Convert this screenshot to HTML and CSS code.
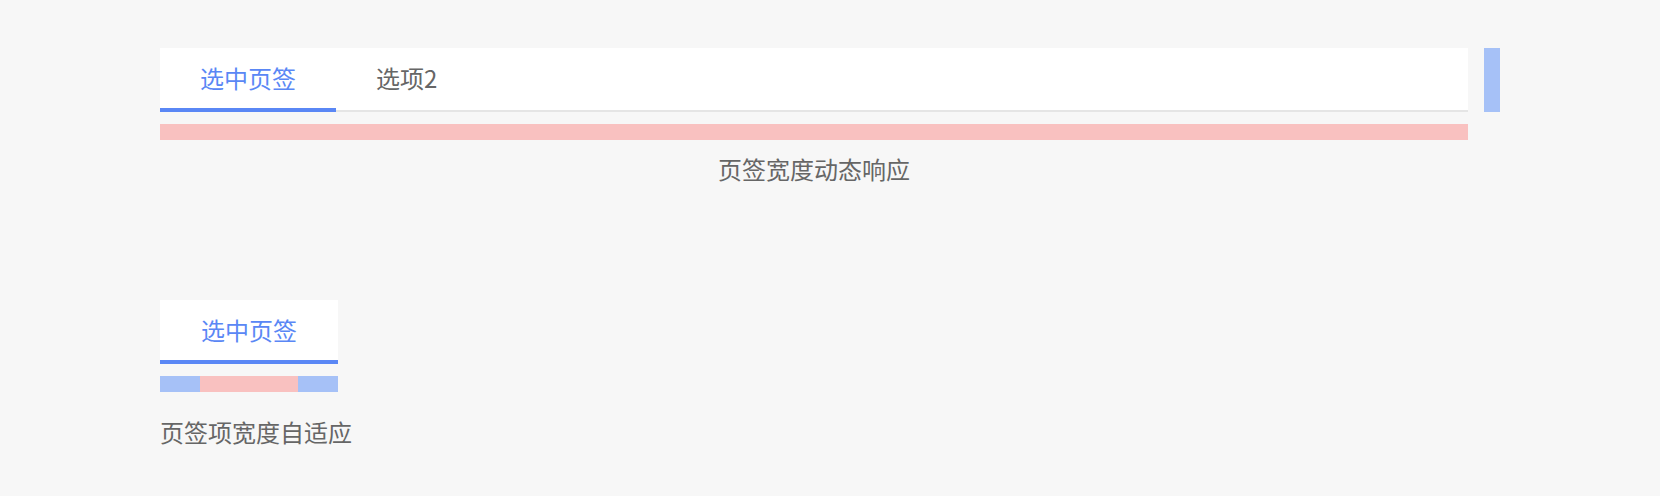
FILE: index.html
```html
<!DOCTYPE html>
<html lang="zh-CN">
<head>
<meta charset="utf-8">
<title>Tabs</title>
<link rel="stylesheet" href="styles.css">
</head>
<body>
<main class="page">
  <section class="demo demo-dynamic">
    <div class="tab-row">
      <div class="tab-col">
        <div class="tabs">
          <div class="tab tab-active">选中页签</div>
          <div class="tab">选项2</div>
        </div>
        <div class="bar bar-pink"></div>
        <p class="caption caption-center">页签宽度动态响应</p>
      </div>
      <div class="side-marker"></div>
    </div>
  </section>

  <section class="demo demo-auto">
    <div class="tabs tabs-inline">
      <div class="tab tab-active"><span class="tab-label">选中页签</span></div>
    </div>
    <div class="padding-bar">
      <div class="pad pad-blue"></div>
      <div class="pad pad-pink"></div>
      <div class="pad pad-blue"></div>
    </div>
    <p class="caption">页签项宽度自适应</p>
  </section>
</main>
</body>
</html>
```

FILE: styles.css
```css
html, body {
  margin: 0;
  padding: 0;
}

body {
  background: #f7f7f7;
  font-family: "Noto Sans CJK SC", "Noto Sans", sans-serif;
  color: #666666;
}

.page {
  padding: 48px 160px 0 160px;
}

.tab-row {
  display: flex;
  align-items: flex-start;
  gap: 16px;
}

.tab-col {
  flex: 1;
  min-width: 0;
}

.tabs {
  display: flex;
  height: 64px;
  background: #ffffff;
  box-shadow: inset 0 -2px 0 #e5e5e5;
}

.tab {
  box-sizing: border-box;
  height: 64px;
  padding: 0 40px;
  font-size: 24px;
  line-height: 60px;
  color: #666666;
  border-bottom: 4px solid transparent;
  white-space: nowrap;
}

.tab-active {
  color: #5a87f5;
  border-bottom-color: #5a87f5;
}

.bar {
  height: 16px;
  margin-top: 12px;
}

.bar-pink {
  background: #f9c1c0;
}

.side-marker {
  flex: 0 0 16px;
  height: 64px;
  background: #a6c1f7;
}

.caption {
  margin: 12px 0 0 0;
  font-size: 24px;
  line-height: 34px;
  color: #666666;
}

.caption-center {
  text-align: center;
}

.demo-auto {
  margin-top: 114px;
}

.tabs-inline {
  display: inline-flex;
  box-shadow: none;
  vertical-align: top;
}

.tab-label {
  display: inline-block;
  width: 98px;
  text-align: center;
}

.padding-bar {
  display: flex;
  margin-top: 12px;
  height: 16px;
}

.pad-blue {
  width: 40px;
  background: #a6c1f7;
}

.pad-pink {
  width: 98px;
  background: #f9c1c0;
}

.demo-auto .caption {
  margin-top: 24px;
  line-height: 32px;
}
```
